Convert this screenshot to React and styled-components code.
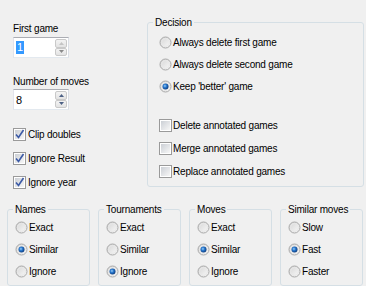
import styled, { createGlobalStyle } from 'styled-components'

const Global = createGlobalStyle`
  html, body {
    margin: 0;
    padding: 0;
    background: #f0f0f0;
  }
  * { box-sizing: border-box; }
`

const Window = styled.div`
  width: 366px;
  height: 286px;
  background: #f0f0f0;
  font-family: "Liberation Sans", Arial, sans-serif;
  font-size: 10px;
  letter-spacing: -0.2px;
  color: #000;
  padding-top: 16px;
  overflow: hidden;
`

// top part
const Top = styled.div`
  display: flex;
  align-items: flex-start;
`
const LeftCol = styled.div`
  width: 147px;
  padding: 6px 0 0 13px;
  display: flex;
  flex-direction: column;
  align-items: flex-start;
`
const Label = styled.div`
  line-height: 13px;
  margin-top: ${props => props.$mt || 0}px;
`

const SpinWrap = styled.div`
  display: flex;
  width: 56px;
  height: 21px;
  margin-top: ${props => props.$mt || 0}px;
  background: #fff;
  border: 1px solid;
  border-color: #abadb3 #dbdfe6 #e3e9ef #e2e3ea;
`
const SpinText = styled.div`
  flex: 1;
  display: flex;
  align-items: center;
  padding-left: 2px;
  font-size: 11px;
`
const Sel = styled.span`
  background: #3399ff;
  color: #fff;
  padding: 0 1px;
  line-height: 13px;
`
const SpinBtns = styled.div`
  width: 12px;
  display: flex;
  flex-direction: column;
  margin: 1px 1px 1px 0;
`
const SpinBtn = styled.div`
  flex: 1;
  display: flex;
  align-items: center;
  justify-content: center;
  border: 1px solid #c9c9c9;
  border-radius: 2px;
  background: linear-gradient(#f3f3f3, #e3e3e3);
`

const CheckList = styled.div`
  margin-top: 12px;
  display: flex;
  flex-direction: column;
`
const Row = styled.div`
  display: flex;
  align-items: center;
  height: ${props => props.$h || 22}px;
  gap: ${props => props.$gap ?? 2}px;
  white-space: nowrap;
`

const Group = styled.fieldset`
  margin: 0;
  min-width: 0;
  border: 1px solid #d5dfe5;
  border-radius: 3px;
  padding: ${props => props.$pad};
`
const Legend = styled.legend`
  margin-left: ${props => props.$ml}px;
  padding: 0 2px;
  line-height: 13px;
  white-space: nowrap;
`

const Decision = styled(Group)`
  width: 217px;
`
const Spacer = styled.div`
  height: 17px;
`

const Bottom = styled.div`
  display: grid;
  grid-template-columns: repeat(4, 83px);
  gap: 8px;
  padding-left: 7px;
  margin-top: 9px;
`

const Arrow = ({ up, color }) => (
  <svg width="5" height="3" viewBox="0 0 5 3">
    <path d={up ? 'M0 3 L2.5 0 L5 3 Z' : 'M0 0 L2.5 3 L5 0 Z'} fill={color} />
  </svg>
)

const Spin = ({ value, selected, mt, upColor, downColor }) => (
  <SpinWrap $mt={mt}>
    <SpinText>{selected ? <Sel>{value}</Sel> : value}</SpinText>
    <SpinBtns>
      <SpinBtn><Arrow up color={upColor} /></SpinBtn>
      <SpinBtn><Arrow color={downColor} /></SpinBtn>
    </SpinBtns>
  </SpinWrap>
)

const Radio = ({ checked }) => (
  <svg width="13" height="13" viewBox="0 0 13 13">
    <defs>
      <linearGradient id="rfill" x1="0" y1="0" x2="1" y2="1">
        <stop offset="0" stopColor="#d4d4d4" />
        <stop offset="1" stopColor="#fbfbfb" />
      </linearGradient>
      <radialGradient id="rdot" cx="0.4" cy="0.4" r="0.6">
        <stop offset="0" stopColor="#9fd0f5" />
        <stop offset="0.45" stopColor="#2a7ad0" />
        <stop offset="1" stopColor="#0d3e82" />
      </radialGradient>
    </defs>
    <circle cx="6.5" cy="6.5" r="5.5" fill="url(#rfill)" stroke="#a8a8a8" />
    <circle cx="6.5" cy="6.5" r="4" fill="none" stroke="#e8e8e8" />
    {checked && <circle cx="6.5" cy="6.5" r="3" fill="url(#rdot)" />}
  </svg>
)

const Check = ({ checked }) => (
  <svg width="13" height="13" viewBox="0 0 13 13">
    <defs>
      <linearGradient id="cfill" x1="0" y1="0" x2="1" y2="1">
        <stop offset="0" stopColor="#cbcfd5" />
        <stop offset="1" stopColor="#f7f7f7" />
      </linearGradient>
    </defs>
    <rect x="0.5" y="0.5" width="12" height="12" fill="#fff" stroke="#9a9a9a" />
    <rect x="2" y="2" width="9" height="9" fill="url(#cfill)" />
    {checked && (
      <path d="M3 6.5 L5.5 9.5 L10.5 2" fill="none" stroke="#3b5aa6" strokeWidth="1.6" />
    )}
  </svg>
)

const RadioGroup = ({ title, items, value }) => (
  <Group $pad="0 4px 3px 7px">
    <Legend $ml={-2}>{title}</Legend>
    {items.map(it => (
      <Row key={it} $gap={1}>
        <Radio checked={it === value} />
        {it}
      </Row>
    ))}
  </Group>
)

export default function App() {
  return (
    <Window>
      <Global />
      <Top>
        <LeftCol>
          <Label>First game</Label>
          <Spin value="1" selected mt={2} upColor="#c4c4c4" downColor="#8a8a8a" />
          <Label $mt={17}>Number of moves</Label>
          <Spin value="8" mt={1} upColor="#4d6185" downColor="#4d6185" />
          <CheckList>
            <Row $h={24}><Check checked />Clip doubles</Row>
            <Row $h={24}><Check checked />Ignore Result</Row>
            <Row $h={24}><Check checked />Ignore year</Row>
          </CheckList>
        </LeftCol>
        <Decision $pad="2px 6px 3px 11px">
          <Legend $ml={-6}>Decision</Legend>
          <Row $gap={1}><Radio />Always delete first game</Row>
          <Row $gap={1}><Radio />Always delete second game</Row>
          <Row $gap={1}><Radio checked />Keep 'better' game</Row>
          <Spacer />
          <Row $h={23} $gap={1}><Check />Delete annotated games</Row>
          <Row $h={23} $gap={1}><Check />Merge annotated games</Row>
          <Row $h={23} $gap={1}><Check />Replace annotated games</Row>
        </Decision>
      </Top>
      <Bottom>
        <RadioGroup title="Names" items={['Exact', 'Similar', 'Ignore']} value="Similar" />
        <RadioGroup title="Tournaments" items={['Exact', 'Similar', 'Ignore']} value="Ignore" />
        <RadioGroup title="Moves" items={['Exact', 'Similar', 'Ignore']} value="Similar" />
        <RadioGroup title="Similar moves" items={['Slow', 'Fast', 'Faster']} value="Fast" />
      </Bottom>
    </Window>
  )
}
